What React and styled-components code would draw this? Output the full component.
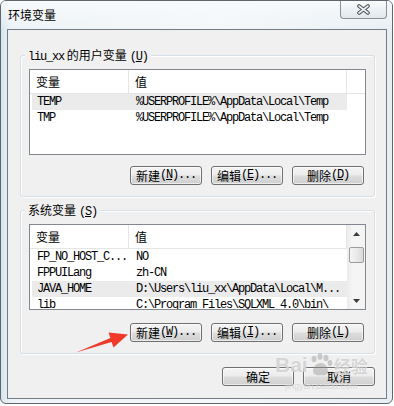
import React from "react";
import styled, { createGlobalStyle } from "styled-components";

const GlobalStyle = createGlobalStyle`
  html, body { margin: 0; padding: 0; background: #fff; }
  body {
    font-family: "Noto Sans CJK SC", "Liberation Sans", sans-serif;
    font-size: 12px;
    color: #000;
  }
`;

const Window = styled.div`
  position: relative;
  box-sizing: border-box;
  width: 393px;
  height: 404px;
  border: 1px solid #60666b;
  border-radius: 6px;
  background: linear-gradient(90deg, #d6e5ef 0px, #edf3f7 10px, #f5f8fa 55%, #e8eff4 100%);
  display: flex;
  flex-direction: column;
  overflow: hidden;
`;

const TitleBar = styled.div`
  height: 28px;
  flex-shrink: 0;
  display: flex;
  justify-content: space-between;
  align-items: flex-start;
  padding: 0 5px 0 7px;
  background: linear-gradient(#f7f9fb, rgba(247, 249, 251, 0));
`;

const Title = styled.div`
  line-height: 28px;
  font-size: 12px;
`;

const CloseButton = styled.div`
  width: 45px;
  height: 18px;
  margin-top: -1px;
  border: 1px solid #8b9094;
  border-top: none;
  border-radius: 0 0 4px 4px;
  background: linear-gradient(#fdfdfe, #eef2f5 50%, #e2e7eb);
  display: flex;
  align-items: center;
  justify-content: center;
`;

const Client = styled.div`
  margin: 0 5px 0 6px;
  height: 370px;
  box-sizing: border-box;
  border: 1px solid #747b82;
  background: #f0f0f0;
  display: flex;
  flex-direction: column;
`;

const GroupBox = styled.div`
  margin: ${(p) => p.$top}px 11px 0 12px;
  border: 1px solid #d5dfe5;
  border-radius: 3px;
  box-shadow: inset 1px 1px 0 #fff, 1px 1px 0 #fff;
  padding: 0 8px 11px;
  display: flex;
  flex-direction: column;
`;

const Legend = styled.div`
  align-self: flex-start;
  margin: -8px 0 0 -4px;
  padding: 0 3px;
  height: 14px;
  line-height: 14px;
  background: #f0f0f0;
  white-space: nowrap;
`;

const Mono = styled.span`
  font-family: "Liberation Mono", "DejaVu Sans Mono", monospace;
  font-size: 12px;
  letter-spacing: -1.2px;
  margin-left: ${(p) => p.$gap || 0}px;
`;

const ListView = styled.div`
  margin-top: 7px;
  height: ${(p) => p.$h}px;
  box-sizing: border-box;
  border: 1px solid #828790;
  background: #fff;
  display: flex;
  overflow: hidden;
`;

const ListBody = styled.div`
  flex: 1;
  min-width: 0;
  display: flex;
  flex-direction: column;
`;

const Header = styled.div`
  display: grid;
  grid-template-columns: 99px 218px 1fr;
  height: 23px;
  flex-shrink: 0;
  border-bottom: 1px solid #e5e5e5;
`;

const HeaderCell = styled.div`
  padding-left: 6px;
  line-height: 23px;
  border-right: 1px solid #e5e5e5;
  &:last-child { border-right: none; }
`;

const Row = styled.div`
  display: grid;
  grid-template-columns: 97px 218px;
  width: 315px;
  height: 16px;
  flex-shrink: 0;
  margin-left: 2px;
  background: ${(p) => (p.$selected ? "#ebebeb" : "transparent")};
`;

const Cell = styled.div`
  padding-left: ${(p) => (p.$first ? 5 : 7)}px;
  font-family: "Liberation Mono", "DejaVu Sans Mono", monospace;
  font-size: 12px;
  letter-spacing: -1.2px;
  line-height: 17px;
  white-space: nowrap;
  overflow: hidden;
`;

const ScrollBar = styled.div`
  width: 18px;
  flex-shrink: 0;
  background: linear-gradient(90deg, #ececec, #f6f6f6 35%, #f3f3f3);
  display: flex;
  flex-direction: column;
`;

const ScrollArrow = styled.div`
  height: 17px;
  display: flex;
  align-items: center;
  justify-content: center;
`;

const Thumb = styled.div`
  margin: 5px 1px 0 2px;
  height: 14px;
  border: 1px solid #9c9c9c;
  border-radius: 2px;
  background: linear-gradient(90deg, #f5f5f5, #e9e9e9 50%, #dadada);
`;

const Track = styled.div`
  flex: 1;
`;

const ButtonRow = styled.div`
  display: flex;
  justify-content: flex-end;
  gap: 9px;
  margin-top: ${(p) => p.$mt}px;
  padding-right: 2px;
`;

const OkRow = styled.div`
  display: flex;
  justify-content: flex-end;
  gap: 9px;
  margin: 13px 11px 0 0;
`;

const Button = styled.div`
  width: 72px;
  height: 19px;
  box-sizing: border-box;
  border: 1px solid #707070;
  border-radius: 3px;
  background: linear-gradient(#f4f4f4 0%, #ececec 48%, #dddddd 52%, #cfcfcf 100%);
  box-shadow: inset 0 0 0 1px rgba(255, 255, 255, 0.6);
  display: flex;
  align-items: center;
  justify-content: center;
  font-size: 12px;
  line-height: 17px;
  white-space: nowrap;
`;

const Arrow = styled.svg`
  position: absolute;
  left: 69px;
  top: 324px;
`;

const Watermark = styled.div`
  position: absolute;
  left: 274px;
  top: 352px;
  display: flex;
  flex-direction: column;
  align-items: flex-start;
  color: rgba(150, 150, 150, 0.4);
  text-shadow: 0 0 1px rgba(255, 255, 255, 0.9);
  pointer-events: none;
`;

const MarkLine = styled.div`
  display: flex;
  align-items: flex-end;
  font-family: "Liberation Sans", sans-serif;
  font-weight: bold;
  font-size: 21px;
  line-height: 24px;
`;

const MarkCn = styled.span`
  font-family: "Noto Sans CJK SC", sans-serif;
  font-size: 17px;
  font-weight: bold;
  line-height: 22px;
`;

const MarkUrl = styled.div`
  margin: 4px 0 0 10px;
  font-family: "Liberation Sans", sans-serif;
  font-size: 9px;
  line-height: 11px;
`;

const userVars = [
  ["TEMP", "%USERPROFILE%\\AppData\\Local\\Temp"],
  ["TMP", "%USERPROFILE%\\AppData\\Local\\Temp"],
];

const sysVars = [
  ["FP_NO_HOST_C...", "NO"],
  ["FPPUILang", "zh-CN"],
  ["JAVA_HOME", "D:\\Users\\liu_xx\\AppData\\Local\\M..."],
  ["lib", "C:\\Program Files\\SQLXML 4.0\\bin\\"],
];

const Key = ({ k }) => (
  <Mono>
    (<u>{k}</u>)...
  </Mono>
);

const VarList = ({ rows, height, selected, scroll }) => (
  <ListView $h={height}>
    <ListBody>
      <Header>
        <HeaderCell>变量</HeaderCell>
        <HeaderCell>值</HeaderCell>
        <HeaderCell />
      </Header>
      {rows.map(([name, value], i) => (
        <Row key={name} $selected={i === selected}>
          <Cell $first>{name}</Cell>
          <Cell>{value}</Cell>
        </Row>
      ))}
    </ListBody>
    {scroll && (
      <ScrollBar>
        <ScrollArrow>
          <svg width="7" height="4" viewBox="0 0 7 4"><path d="M0 4 L3.5 0 L7 4 Z" fill="#3c3c3c" /></svg>
        </ScrollArrow>
        <Thumb />
        <Track />
        <ScrollArrow>
          <svg width="7" height="4" viewBox="0 0 7 4"><path d="M0 0 L7 0 L3.5 4 Z" fill="#3c3c3c" /></svg>
        </ScrollArrow>
      </ScrollBar>
    )}
  </ListView>
);

export default function App() {
  return (
    <>
      <GlobalStyle />
      <Window>
        <TitleBar>
          <Title>环境变量</Title>
          <CloseButton>
            <svg width="13" height="11" viewBox="0 0 13 11">
              <path d="M2 2 L11 9 M11 2 L2 9" stroke="#4a4f55" strokeWidth="3.6" strokeLinecap="round" />
              <path d="M2 2 L11 9 M11 2 L2 9" stroke="#eef0f2" strokeWidth="1.6" strokeLinecap="round" />
            </svg>
          </CloseButton>
        </TitleBar>

        <Client>
          <GroupBox $top={25}>
            <Legend>
              <Mono>liu_xx</Mono> 的用户变量<Mono $gap={3}>(<u>U</u>)</Mono>
            </Legend>
            <VarList rows={userVars} height={86} selected={0} />
            <ButtonRow $mt={11}>
              <Button>新建<Key k="N" /></Button>
              <Button>编辑<Key k="E" /></Button>
              <Button>删除<Mono>(<u>D</u>)</Mono></Button>
            </ButtonRow>
          </GroupBox>

          <GroupBox $top={13}>
            <Legend>
              系统变量<Mono $gap={3}>(<u>S</u>)</Mono>
            </Legend>
            <VarList rows={sysVars} height={86} selected={2} scroll />
            <ButtonRow $mt={13}>
              <Button>新建<Key k="W" /></Button>
              <Button>编辑<Key k="I" /></Button>
              <Button>删除<Mono>(<u>L</u>)</Mono></Button>
            </ButtonRow>
          </GroupBox>

          <OkRow>
            <Button>确定</Button>
            <Button>取消</Button>
          </OkRow>
        </Client>

        <Arrow width="62" height="32" viewBox="0 0 62 32">
          <path d="M6 27.5 L40.4 13.1 L38.5 7.5 L58 9.5 L43.5 22.5 L41.6 16.9 Z" fill="#ef3a2b" />
        </Arrow>

        <Watermark>
          <MarkLine>
            Bai
            <svg width="26" height="24" viewBox="0 0 26 24">
              <g fill="rgba(150,150,150,0.45)">
                <ellipse cx="6" cy="6" rx="2.5" ry="3.2" />
                <ellipse cx="12" cy="3.5" rx="2.5" ry="3.2" />
                <ellipse cx="18" cy="5" rx="2.5" ry="3.2" />
                <ellipse cx="22" cy="10" rx="2.3" ry="3" />
                <path d="M5 18 C5 13 9 10 13 10 C17 10 20 14 20 18 C20 22 16 23 13 22 C10 23 5 22 5 18 Z" />
              </g>
            </svg>
            <MarkCn>经验</MarkCn>
          </MarkLine>
          <MarkUrl>jingyan.baidu.com</MarkUrl>
        </Watermark>
      </Window>
    </>
  );
}
